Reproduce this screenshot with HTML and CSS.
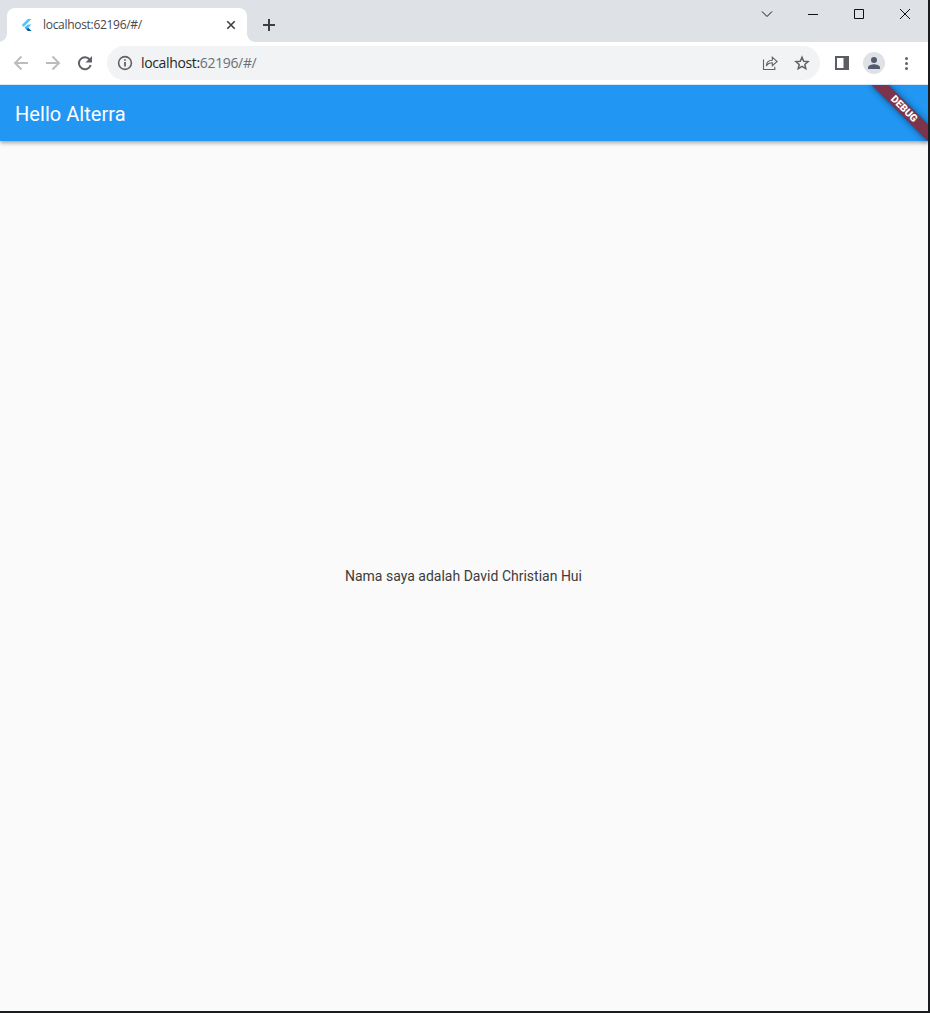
FILE: index.html
```html
<!DOCTYPE html>
<html lang="id">
<head>
<meta charset="utf-8">
<title>localhost:62196/#/</title>
<link rel="stylesheet" href="styles.css">
</head>
<body>
<div class="window">
  <header class="tabstrip">
    <div class="tab">
      <svg class="favicon" width="16" height="16" viewBox="0 0 16 16"><path fill="#54c5f8" d="M8.800 2 2.800 8l1.900 1.900L12.500 2z"/><path fill="#54c5f8" d="M8.800 7.400h3.700L9.200 10.700 7.300 8.900z"/><path fill="#29b6f6" d="m5.500 10.700 1.900-1.850 1.850 1.850-1.850 1.850z"/><path fill="#01579b" d="m7.400 12.550 1.850-1.850 3.250 3.300H8.800z"/></svg>
      <span class="tab-title">localhost:62196/#/</span>
      <svg class="tab-close" width="16" height="16" viewBox="0 0 16 16"><path d="m4.300 4.300 7.400 7.400m0-7.400-7.400 7.400" stroke="#3c4043" stroke-width="1.600"/></svg>
    </div>
    <svg class="new-tab" width="16" height="16" viewBox="0 0 16 16"><path d="M8 2v12M2 8h12" stroke="#3c4043" stroke-width="2"/></svg>
    <div class="controls">
      <svg width="46" height="28" viewBox="0 0 46 28"><path d="m18 11.500 5 5 5-5"/></svg>
      <svg width="46" height="28" viewBox="0 0 46 28"><path d="M18 14.500h10"/></svg>
      <svg width="46" height="28" viewBox="0 0 46 28"><path d="M18.500 9.500h9v9h-9z"/></svg>
      <svg width="46" height="28" viewBox="0 0 46 28"><path d="m18 9 10 10m0-10-10 10"/></svg>
    </div>
  </header>
  <nav class="toolbar">
    <div class="nav-buttons">
      <svg width="16" height="16" viewBox="0 0 16 16"><path class="arrow" d="M15 8H2m6.500-6.500L2 8l6.500 6.500"/></svg>
      <svg width="16" height="16" viewBox="0 0 16 16"><path class="arrow" d="M1 8h13M7.500 1.500 14 8l-6.500 6.500"/></svg>
      <svg width="16" height="16" viewBox="0 0 16 16"><path fill="none" stroke="#5f6368" stroke-width="2" d="M13 5A6 6 0 1 0 13.700 10"/><path fill="#5f6368" d="M15 1v6.500H8.500z"/></svg>
    </div>
    <div class="omnibox">
      <svg width="16" height="16" viewBox="0 0 16 16"><circle cx="8" cy="8" r="6.400" fill="none" stroke="#5f6368" stroke-width="1.600"/><path fill="#5f6368" d="M7.100 7h1.800v4.500H7.100zM7.100 4.200h1.800v1.600H7.100z"/></svg>
      <span class="url"><b>localhost:</b>62196/#/</span>
      <svg class="share" width="16" height="16" viewBox="0 0 16 16"><path fill="none" stroke="#5f6368" stroke-width="1.100" d="M1.500 4.500v10h11.300v-2.700M4.300 11c.3-4 2.600-5.700 6-5.700V2.200L15.100 6.500l-4.800 4.200V7.800c-3 0-4.700 1-6 3.200z"/></svg>
      <svg width="16" height="16" viewBox="0 0 16 16"><path fill="none" stroke="#5f6368" stroke-width="1.500" d="m8 2.200 1.700 4 4.400.4-3.300 2.900 1 4.200L8 11.400l-3.800 2.300 1-4.200-3.300-2.900 4.400-.4z"/></svg>
    </div>
    <svg class="panel" width="16" height="16" viewBox="0 0 16 16"><path fill="#5a5d61" fill-rule="evenodd" d="M1 1h14v14H1zM3 3v10h6.500V3z"/></svg>
    <svg class="avatar" width="22" height="22" viewBox="0 0 22 22"><circle cx="11" cy="11" r="11" fill="#dee1e6"/><circle cx="11" cy="8" r="3" fill="#535b70"/><path fill="#535b70" d="M5 17v-1.500C5 13.500 9 12.300 11 12.300s6 1.200 6 3.200V17z"/></svg>
    <svg class="more" width="16" height="16" viewBox="0 0 16 16"><g fill="#5f6368"><circle cx="8.500" cy="3.500" r="1.500"/><circle cx="8.500" cy="8.500" r="1.500"/><circle cx="8.500" cy="13.500" r="1.500"/></g></svg>
  </nav>
  <main class="app">
    <div class="appbar"><h1>Hello Alterra</h1></div>
    <div class="content"><p>Nama saya adalah David Christian Hui</p></div>
    <div class="banner">DEBUG</div>
  </main>
</div>
</body>
</html>
```
FILE: styles.css
```css
* { box-sizing: border-box; }
body { margin: 0; height: 1013px; background: #1b1c20; overflow: hidden; }
svg { display: block; flex: none; }
.window { width: 928px; height: 1011px; display: flex; flex-direction: column; background: #fff; }
.tabstrip { height: 42px; flex: none; display: flex; background: #dee1e6; padding: 8px 0 0 7px; }
.tab {
  position: relative; width: 240px; height: 34px; display: flex; align-items: center;
  padding: 0 8px 0 12px; background: #fff; border-radius: 8px 8px 0 0;
}
.tab::before, .tab::after { content: ""; position: absolute; bottom: 0; width: 8px; height: 8px; }
.tab::before { left: -8px; background: radial-gradient(circle at 0 0, transparent 7.5px, #fff 8px); }
.tab::after { right: -8px; background: radial-gradient(circle at 100% 0, transparent 7.5px, #fff 8px); }
.tab-title { flex: 1; margin-left: 8px; padding-bottom: 2px; font: 12px "Open Sans", sans-serif; letter-spacing: -0.3px; color: #45494d; white-space: nowrap; }
.new-tab { margin: 9px 0 0 14px; }
.controls { display: flex; margin: -8px 0 0 auto; }
.controls path { fill: none; stroke: #111; stroke-width: 1; }
.toolbar { height: 43px; flex: none; display: flex; align-items: center; padding: 0 13px; border-bottom: 1px solid #d5e5f3; }
.nav-buttons { display: flex; gap: 16px; }
.arrow { fill: none; stroke: #babcbe; stroke-width: 1.9; }
.omnibox { width: 713px; height: 34px; margin-left: 14px; padding: 0 10px; display: flex; align-items: center; background: #f1f3f4; border-radius: 17px; }
.url { margin-left: 8px; padding-bottom: 1px; font: 14px "Open Sans", sans-serif; letter-spacing: -0.35px; color: #6c7074; white-space: nowrap; }
.url b { font-weight: 400; color: #25282b; }
.share { margin: 0 16px 0 auto; }
.panel { margin-left: 14px; }
.avatar { margin-left: 13px; }
.more { margin-left: 13px; }
.app { position: relative; flex: 1; display: flex; flex-direction: column; overflow: hidden; background: #fafafa; font-family: Roboto, sans-serif; }
.appbar { height: 56px; flex: none; display: flex; align-items: center; padding: 2px 15px 0; background: #2196f3; box-shadow: 0 2px 4px rgba(0, 0, 0, .35); }
.appbar h1 { margin: 0; font-size: 20px; font-weight: 400; letter-spacing: 0.05px; color: #fff; }
.content { flex: 1; display: flex; align-items: center; justify-content: center; padding-right: 1px; }
.content p { margin: 0; font-size: 14px; color: #3c3c3c; }
.banner {
  position: absolute; top: 18px; right: -16px; width: 80px; height: 12px; transform: rotate(45deg);
  background: #7b344b; box-shadow: 0 0 6px rgba(0, 0, 0, .5);
  color: #fff; font-size: 10.2px; font-weight: 900; line-height: 12px; text-align: center;
}
```
